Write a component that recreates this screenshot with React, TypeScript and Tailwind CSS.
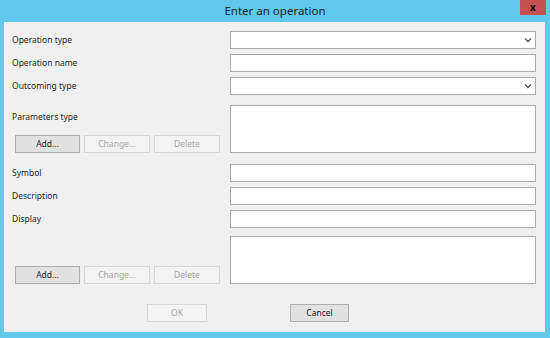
import React from "react";

const font = { fontFamily: '"Noto Sans", "Open Sans", sans-serif' };

const Chevron = () => (
  <svg width="8" height="6" viewBox="0 0 8 6" className="shrink-0">
    <polyline points="1,1.5 4,4.5 7,1.5" fill="none" stroke="#555" strokeWidth="1.4" />
  </svg>
);

type FieldProps = { label?: string; select?: boolean };

const Field: React.FC<FieldProps> = ({ label, select }) => (
  <div className="flex items-center h-[18px]">
    <div className="w-[218px] text-[8.5px] text-[#1e1e1e]">{label}</div>
    <div className="w-[306px] h-[18px] bg-white border border-[#ababab] flex items-center justify-end pr-[3px]">
      {select && <Chevron />}
    </div>
  </div>
);

const WinButton: React.FC<{ label: string; disabled?: boolean; w: string }> = ({
  label,
  disabled,
  w,
}) => (
  <div
    className={`${w} h-[18px] flex items-center justify-center text-[8.5px] border ${
      disabled
        ? "bg-[#f3f3f3] border-[#d6d6d6] text-[#a6a6a6]"
        : "bg-[#e1e1e1] border-[#adadad] text-[#1e1e1e]"
    }`}
  >
    {label}
  </div>
);

const ListBlock: React.FC<{ label?: string }> = ({ label }) => (
  <div className="flex h-[48px]">
    <div className="w-[218px] flex flex-col justify-between">
      <div className="text-[8.5px] text-[#1e1e1e] mt-[6px]">{label}</div>
      <div className="flex gap-[4px] ml-[3px] mr-[7px]">
        <WinButton label="Add..." w="w-[65px]" />
        <WinButton label="Change..." w="w-[66px]" disabled />
        <WinButton label="Delete" w="w-[66px]" disabled />
      </div>
    </div>
    <div className="w-[306px] h-[48px] bg-white border border-[#ababab]" />
  </div>
);

export default function App() {
  return (
    <div className="w-[550px] h-[338px] bg-[#62c9ea] flex flex-col" style={font}>
      <div className="h-[22px] relative flex items-center justify-center">
        <span className="text-[11.5px] text-[#202020]">Enter an operation</span>
        <div className="absolute right-[4px] top-0 w-[26px] h-[15px] bg-[#c75050] flex items-center justify-center">
          <span className="text-[10px] font-bold text-black leading-none mb-[1px]">x</span>
        </div>
      </div>
      <div className="flex-1 ml-[4px] mr-[5px] mb-[6px] bg-[#f0f0f0] border-l border-[#f8f8f8] pl-[7px] pt-[9px] flex flex-col">
        <div className="flex flex-col gap-[5px]">
          <Field label="Operation type" select />
          <Field label="Operation name" />
          <Field label="Outcoming type" select />
        </div>
        <div className="mt-[10px]">
          <ListBlock label="Parameters type" />
        </div>
        <div className="mt-[11px] flex flex-col gap-[5px]">
          <Field label="Symbol" />
          <Field label="Description" />
          <Field label="Display" />
        </div>
        <div className="mt-[8px]">
          <ListBlock />
        </div>
        <div className="mt-[20px] flex">
          <div className="ml-[135px]">
            <WinButton label="OK" w="w-[60px]" disabled />
          </div>
          <div className="ml-[83px]">
            <WinButton label="Cancel" w="w-[59px]" />
          </div>
        </div>
      </div>
    </div>
  );
}
